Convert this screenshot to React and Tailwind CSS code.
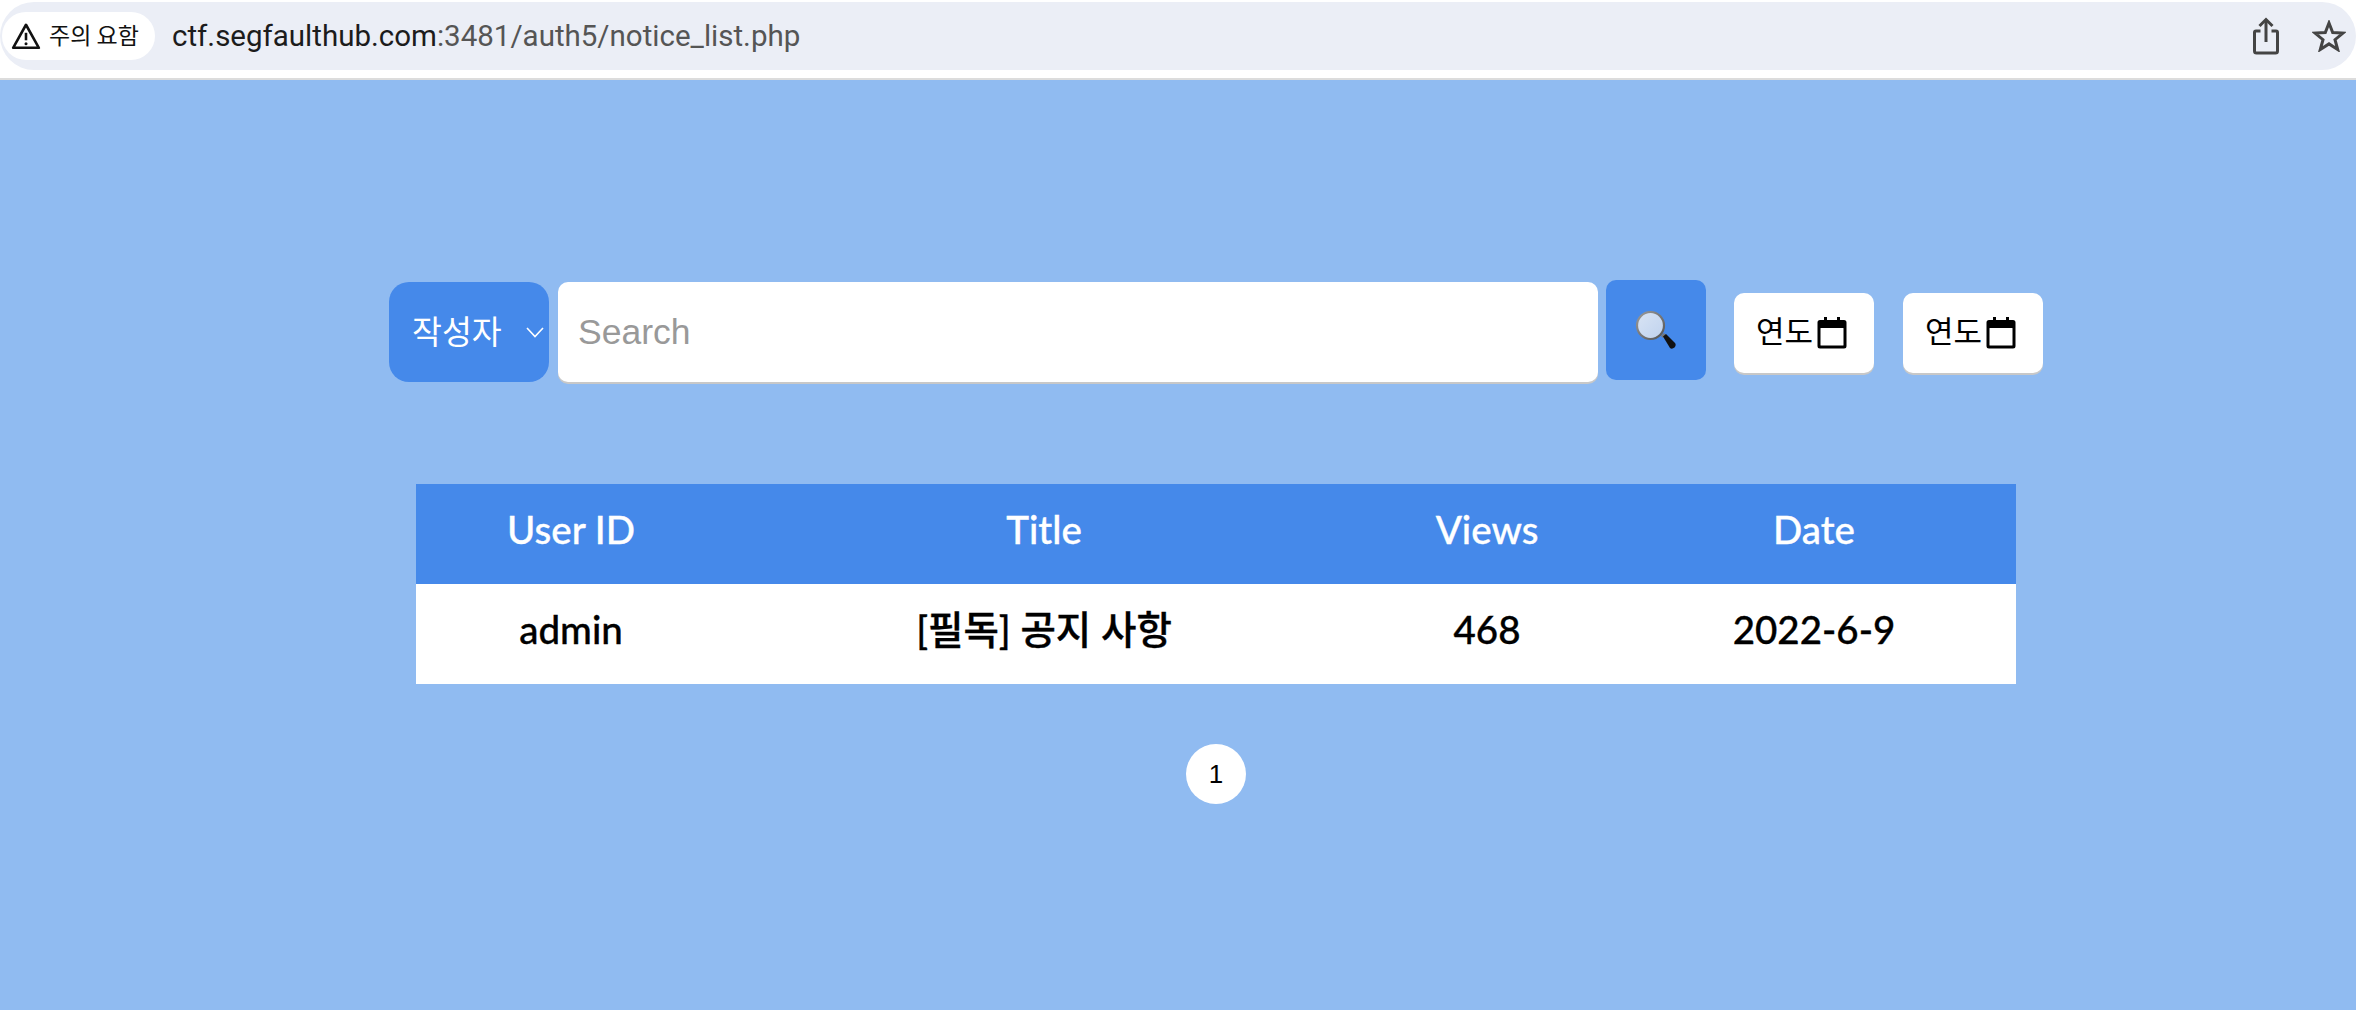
import React from "react";

const kr = "font-['Noto_Sans_CJK_KR','Noto_Sans',sans-serif]";

function TriangleIcon() {
  return (
    <svg width="30" height="28" viewBox="0 0 28 26" fill="none" className="shrink-0">
      <path d="M14 2.5 L26 24 H2 Z" stroke="#111" strokeWidth="2.4" strokeLinejoin="round" />
      <path d="M14 10 V17" stroke="#111" strokeWidth="2.4" />
      <circle cx="14" cy="20.2" r="1.4" fill="#111" />
    </svg>
  );
}

function ShareIcon() {
  return (
    <svg width="26" height="38" viewBox="0 0 26 38" fill="none" stroke="#444" strokeWidth="3">
      <path d="M7.5 14 H3 a1.5 1.5 0 0 0 -1.5 1.5 V34 a2 2 0 0 0 2 2 H22.500 a2 2 0 0 0 2 -2 V15.500 A1.500 1.500 0 0 0 23 14 H18.500" />
      <path d="M13 25 V3" />
      <path d="M6.500 9 L13 2.500 L19.500 9" />
    </svg>
  );
}

function StarIcon() {
  return (
    <svg width="34" height="32" viewBox="0 0 34 32" fill="none">
      <path d="M17 3 L20.700 12.600 L31 13.100 L23 19.700 L25.700 29.500 L17 23.900 L8.300 29.500 L11 19.700 L3 13.100 L13.300 12.600 Z" stroke="#444" strokeWidth="3" strokeLinejoin="miter" />
    </svg>
  );
}

function Magnifier() {
  return (
    <svg width="42" height="41" viewBox="0 0 42 41">
      <defs>
        <linearGradient id="glass" x1="0" y1="0" x2="1" y2="1">
          <stop offset="0" stopColor="#d9e4f4" />
          <stop offset="1" stopColor="#bfd2ee" />
        </linearGradient>
        <linearGradient id="ring" x1="0" y1="0" x2="1" y2="1">
          <stop offset="0" stopColor="#9a9a9a" />
          <stop offset="1" stopColor="#555" />
        </linearGradient>
      </defs>
      <path d="M26 26 L29 23 L31 25 L28 28 Z" fill="#777" />
      <path d="M28 26.500 L31 24 L40 33 Q41.500 35 39.500 37.500 Q37 39.500 35 38 Z" fill="#111" />
      <circle cx="15.500" cy="15.500" r="13.500" fill="url(#glass)" stroke="url(#ring)" strokeWidth="2.200" />
    </svg>
  );
}

function Calendar() {
  return (
    <svg width="30" height="32" viewBox="0 0 30 32" className="shrink-0">
      <path d="M7 0 H10 V3 H20 V0 H23 V3 H27 a2.500 2.500 0 0 1 2.500 2.500 V29 a2.500 2.500 0 0 1 -2.500 2.500 H3 a2.500 2.500 0 0 1 -2.500 -2.500 V5.500 A2.500 2.500 0 0 1 3 3 H7 Z" fill="#000" />
      <rect x="3.500" y="11" width="23" height="17.500" fill="#fff" rx="0.500" />
    </svg>
  );
}

function YearButton({ className }) {
  return (
    <div className={`w-[140px] h-[80px] mt-[13px] bg-white rounded-[10px] shadow-[0_2px_0_#c8c8c8] flex items-start pt-[17px] pl-[22px] gap-[4px] text-black text-[31px] leading-[40px] ${kr} ${className}`}>
      <span>연도</span>
      <span className="mt-[7px]"><Calendar /></span>
    </div>
  );
}

export default function App() {
  return (
    <div className="w-[2356px] h-[1010px] overflow-hidden bg-[#90bbf1] flex flex-col">
      <header className="h-[80px] bg-white border-b-2 border-[#dcdcdc] pt-[2px] shrink-0">
        <div className="h-[68px] bg-[#ebeef6] rounded-[34px] flex items-center pl-[2px] pr-[10px]">
          <div className={`w-[153px] h-[48px] bg-white rounded-[24px] flex items-center pl-[9px] gap-[8px] text-[23px] text-[#111] ${kr}`}>
            <TriangleIcon />
            <span className="whitespace-nowrap -mt-[3px]">주의 요함</span>
          </div>
          <div className="ml-[17px] font-['Roboto',sans-serif] text-[29.500px] text-[#555] whitespace-nowrap">
            <span className="text-[#1c1c1c]">ctf.segfaulthub.com</span>:3481/auth5/notice_list.php
          </div>
          <div className="ml-auto flex items-center gap-[33px]">
            <ShareIcon />
            <StarIcon />
          </div>
        </div>
      </header>

      <main className="flex-1 flex flex-col">
        <div className="flex items-start mt-[200px] pl-[389px]">
          <div className={`relative w-[160px] h-[100px] mt-[2px] bg-[#4589ea] rounded-[20px] flex items-center pl-[23px] text-white text-[32.500px] ${kr}`}>
            <span className="-mt-[4px]">작성자</span>
            <svg width="18" height="11" viewBox="0 0 18 11" fill="none" stroke="#fff" strokeWidth="1.600" className="absolute left-[137px] top-[45px]">
              <path d="M1 1 L9 9.500 L17 1" />
            </svg>
          </div>
          <input
            placeholder="Search"
            readOnly
            className="w-[1040px] h-[100px] mt-[2px] ml-[9px] bg-white rounded-[10px] shadow-[0_2px_0_#c8c8c8] pl-[20px] text-[35.500px] font-['Liberation_Sans',sans-serif] placeholder:text-[#999] outline-none"
          />
          <div className="w-[100px] h-[100px] ml-[8px] bg-[#4589ea] rounded-[10px] flex items-center justify-center">
            <Magnifier />
          </div>
          <YearButton className="ml-[28px]" />
          <YearButton className="ml-[29px]" />
        </div>

        <table className="w-[1600px] ml-[416px] mt-[102px] table-fixed border-collapse text-center text-[38.500px] font-medium font-['Lato','Noto_Sans_CJK_KR',sans-serif] [-webkit-text-stroke:0.35px_currentColor]">
          <colgroup>
            <col className="w-[310px]" />
            <col className="w-[636px]" />
            <col className="w-[250px]" />
            <col className="w-[404px]" />
          </colgroup>
          <thead>
            <tr className="h-[100px] bg-[#4589ea] text-white">
              <th className="font-medium p-0 pb-[8px]">User ID</th>
              <th className="font-medium p-0 pb-[8px]">Title</th>
              <th className="font-medium p-0 pb-[8px]">Views</th>
              <th className="font-medium p-0 pb-[8px]">Date</th>
            </tr>
          </thead>
          <tbody>
            <tr className="h-[100px] bg-white text-black">
              <td className="p-0 pb-[8px]">admin</td>
              <td className="p-0 pb-[8px]">[필독] 공지 사항</td>
              <td className="p-0 pb-[8px]">468</td>
              <td className="p-0 pb-[8px]">2022-6-9</td>
            </tr>
          </tbody>
        </table>

        <div className="w-[1600px] ml-[416px] mt-[60px] flex justify-center">
          <div className="w-[60px] h-[60px] rounded-full bg-white flex items-center justify-center text-black text-[26px] font-['Liberation_Sans',sans-serif]">
            1
          </div>
        </div>
      </main>
    </div>
  );
}
